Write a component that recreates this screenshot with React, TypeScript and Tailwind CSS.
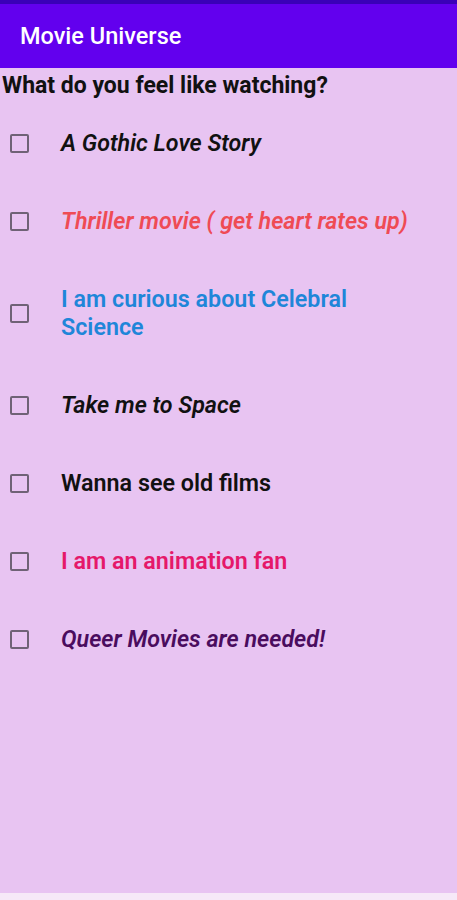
import React from "react";

const items: { label: string; cls: string }[] = [
  { label: "A Gothic Love Story", cls: "italic text-[#111111]" },
  { label: "Thriller movie ( get heart rates up)", cls: "italic text-[#ef4b55]" },
  { label: "I am curious about Celebral Science", cls: "text-[#1f86d9]" },
  { label: "Take me to Space", cls: "italic text-[#111111]" },
  { label: "Wanna see old films", cls: "text-[#111111]" },
  { label: "I am an animation fan", cls: "text-[#e5186a]" },
  { label: "Queer Movies are needed!", cls: "italic text-[#4a0c5e]" },
];

export default function App() {
  return (
    <div
      className="w-[457px] h-[900px] flex flex-col bg-[#e8c4f2] overflow-hidden"
      style={{ fontFamily: "Roboto, 'Noto Sans', sans-serif" }}
    >
      <div className="h-[4px] bg-[#3a00b8]" />
      <div className="h-[64px] bg-[#6200ee] flex items-center pl-5 pt-[2px]">
        <span className="text-white text-[23.5px] font-medium">Movie Universe</span>
      </div>
      <div className="pt-1 pb-1 pl-[2px] text-[23px] leading-[28px] font-bold text-[#111111]">
        What do you feel like watching?
      </div>
      <div className="flex flex-col">
        {items.map((it) => (
          <div key={it.label} className="flex items-center py-[25px]">
            <div className="w-[61px] shrink-0 flex items-center">
              <div className="ml-[10px] w-[19px] h-[19px] border-2 border-[#6f6276] rounded-[2px]" />
            </div>
            <div className={`w-[362px] text-[23.3px] leading-[28px] font-semibold ${it.cls}`}>
              {it.label}
            </div>
          </div>
        ))}
      </div>
      <div className="flex-1" />
      <div className="h-[7px] bg-[#f6e9f8]" />
    </div>
  );
}
